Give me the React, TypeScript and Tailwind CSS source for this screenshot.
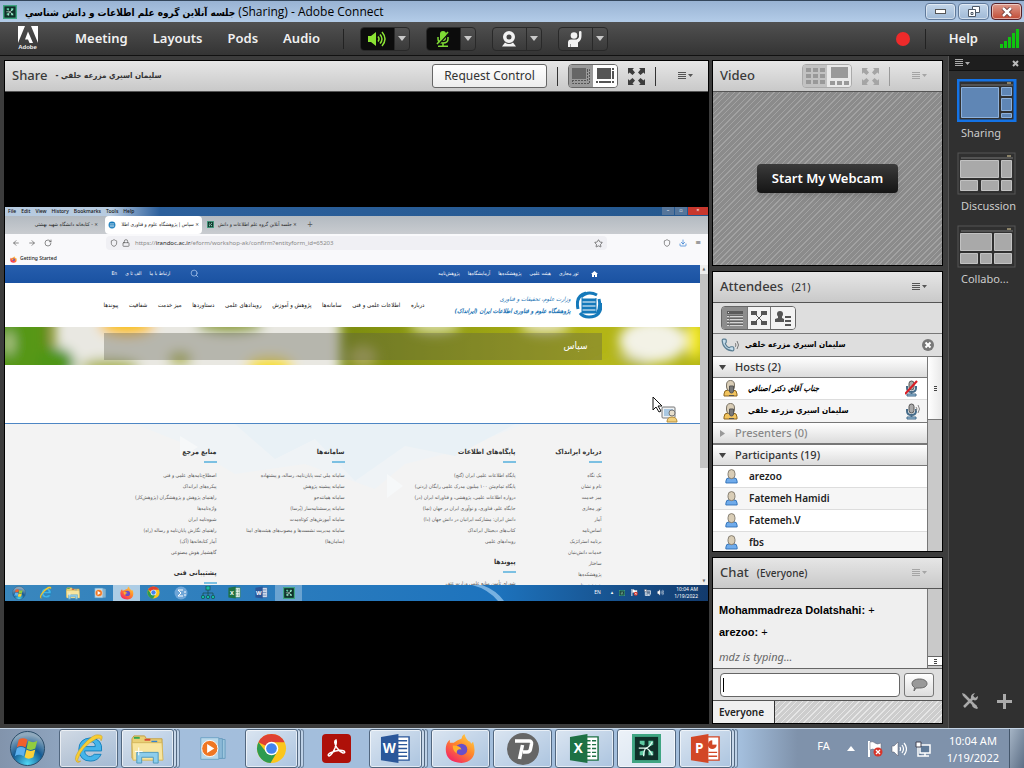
import React from "react";
import { Phone, Star, Search, Lock, Shield, RotateCw, ArrowLeft, ArrowRight, Download } from "lucide-react";

const UI = "font-['Noto_Sans','DejaVu_Sans',sans-serif]";
const FA = "font-['DejaVu_Sans_Condensed','DejaVu_Sans',sans-serif]";

function ListMenu({ dim = false }: { dim?: boolean }) {
  return (
    <button aria-label="Pod options" className={dim ? "text-[#a5a5a5]" : "text-[#555]"}>
      <svg width="16" height="9" viewBox="0 0 16 9" fill="currentColor">
        <path d="M0 0h8v1H0zM0 2h8v1H0zM0 4h8v1H0zM0 6h8v1H0zM10 2h5l-2.500 3z" />
      </svg>
    </button>
  );
}

function Expand({ dim = false }: { dim?: boolean }) {
  return (
    <button aria-label="Full screen" className={dim ? "text-[#a5a5a5]" : "text-[#3c3c3c]"}>
      <svg width="17" height="17" viewBox="0 0 17 17" fill="currentColor">
        <path d="M0 0h6L4.500 1.500 7 4.500 4.500 7 1.500 4.500 0 6zM17 0h-6l1.500 1.500L10 4.500 12.500 7l3-2.500L17 6zM0 17h6l-1.500-1.500L7 12.500 4.500 10l-3 2.500L0 11zM17 17h-6l1.500-1.500L10 12.500 12.500 10l3 2.500L17 11z" />
      </svg>
    </button>
  );
}

function PodHeader({ title, sub, children }: { title: string; sub?: React.ReactNode; children?: React.ReactNode }) {
  return (
    <header className="flex h-[31px] shrink-0 items-center border-b border-[#555] bg-gradient-to-b from-[#e6e6e6] to-[#c9c9c9] pl-[7px] pr-[14px]">
      <h2 className="text-[13px] font-medium text-[#3a3a3a]">{title}</h2>
      {sub}
      <div className="ml-auto flex items-center">{children}</div>
    </header>
  );
}

function ConnectIcon({ size }: { size: number }) {
  return (
    <svg width={size} height={size} viewBox="0 0 30 30" className="shrink-0">
      <rect x="1.500" y="1.500" width="27" height="27" fill="#0f3029" stroke="#3fa582" strokeWidth="3" />
      <path d="M8 7h5v4l-1 1-4-2zM17 7h5v4l-4 2-1-1zM8 18l4-1 1 1v4H8zM17 18l1-1 4 1v4h-5z" fill="#5fc9a2" />
      <path d="M7 14.500h7M14 14.500Q18 14 21 8M14 14.500Q18 15 21 22M14 14.500Q12 18 12 23" stroke="#e6fbf2" strokeWidth="1.300" fill="none" />
    </svg>
  );
}

function ToolGroup({ label, active, children }: { label: string; active?: boolean; children: React.ReactNode }) {
  return (
    <div className="flex h-6 w-[50px] overflow-hidden rounded-sm border border-[#292929] bg-gradient-to-b from-[#505050] to-[#3a3a3a]">
      <button aria-label={label} className={`flex w-[33px] items-center justify-center ${active ? "bg-[#0c0c0c]" : ""}`}>
        {children}
      </button>
      <button aria-label={`${label} options`} className="flex flex-1 items-center justify-center border-l border-[#292929]">
        <svg width="8" height="5" viewBox="0 0 8 5"><path d="M0 0h8L4 5z" fill="#c9c9c9" /></svg>
      </button>
    </div>
  );
}

function MenuBar() {
  return (
    <nav className="flex h-[34px] shrink-0 items-center border-b border-[#111] bg-gradient-to-b from-[#515151] to-[#343434] text-[13px] font-semibold text-[#f1f1f1]">
      <div className="flex w-[55px] flex-col items-center">
        <svg width="20" height="17" viewBox="0 0 20 17">
          <path d="M0 0h7L0 17zM13 0h7v17zM10 5.500L15 17h-3.500L10 13.500H7z" fill="#fff" />
        </svg>
        <span className="font-['Liberation_Sans',sans-serif] text-[6px] font-bold leading-[8px]">Adobe</span>
      </div>
      <div className="flex gap-[25px] pl-5">
        <button>Meeting</button><button>Layouts</button><button>Pods</button><button>Audio</button>
      </div>
      <div className="ml-[23px] mr-4 h-5 w-px bg-[#222]" />
      <div className="flex gap-4">
        <ToolGroup label="Speakers" active>
          <svg width="18" height="16" viewBox="0 0 18 16" fill="none" stroke="#8be234" strokeWidth="1.500">
            <path d="M0 5h3l5-4v14l-5-4H0z" fill="#8be234" stroke="none" />
            <path d="M10 5.500q2 2.500 0 5M12 3.500q4 4.500 0 9M14 1q6 7 0 14" />
          </svg>
        </ToolGroup>
        <ToolGroup label="Microphone" active>
          <svg width="16" height="16" viewBox="0 0 16 16" fill="none" stroke="#7fdc35" strokeWidth="1.500">
            <rect x="5" y="0" width="6" height="10" rx="3" fill="#7fdc35" stroke="none" />
            <path d="M3 6v2q0 4 5 4t5-4V6M8 12v3M3 15.200h10" />
            <path d="M3 14L14 2" stroke="#111" strokeWidth="1.500" /><path d="M2 13L13 1" />
          </svg>
        </ToolGroup>
        <ToolGroup label="Webcam">
          <svg width="16" height="16" viewBox="0 0 16 16" fill="#f2f2f2">
            <path fillRule="evenodd" d="M8 0a6 6 0 1 1 0 12A6 6 0 0 1 8 0zm0 3.500a2.500 2.500 0 1 0 0 5 2.500 2.500 0 0 0 0-5z" />
            <path d="M4 11.500q4 3 8 0l3 4H1z" />
          </svg>
        </ToolGroup>
        <ToolGroup label="Raise hand">
          <svg width="16" height="16" viewBox="0 0 16 16" fill="#f2f2f2">
            <circle cx="7" cy="4.500" r="3.300" />
            <path d="M1 16v-4.500Q1 8.500 4 8.500h5.500Q12.500 7 12 4V1q0-1 1.200-1T14.500 1v4q0 4-3.500 6.500V16H4v-3h-.5v3z" />
          </svg>
        </ToolGroup>
      </div>
      <div className="ml-auto h-[14px] w-[14px] rounded-full bg-[#ee2a2a]" />
      <div className="ml-[15px] mr-[23px] h-5 w-px bg-[#222]" />
      <button>Help</button>
      <svg className="ml-[22px] mr-1" width="20" height="19" viewBox="0 0 20 19">
        <path d="M0 15h3v4H0zM4 12h3v7H4zM8 8h3v11H8zM12 4h3v15h-3zM16 0h3v19h-3z" fill="#0fc50f" />
      </svg>
    </nav>
  );
}

const columns: { width: string; title: string; items: string[]; more?: string; moreItems?: string[] }[] = [
  { width: "w-[86px]", title: "درباره ایرانداک", items: ["یک نگاه", "نام و نشان", "میز خدمت", "تور مجازی", "آمار", "اساس‌نامه", "برنامه استراتژیک", "خدمات دانش‌بنیان", "ساختار", "پژوهشکده‌ها", "هم‌نشینی‌ها"] },
  { width: "w-[171px]", title: "پایگاه‌های اطلاعات", items: ["پایگاه اطلاعات علمی ایران (گنج)", "پایگاه تمام‌متن ۱۰۰ میلیون مدرک علمی رایگان (زدنی)", "درواره اطلاعات علمی، پژوهشی، و فناورانه ایران (در)", "جایگاه علم، فناوری، و نوآوری ایران در جهان (نما)", "دانش ایران: مشارکت ایرانیان در دانش جهان (دا)", "کتاب‌های دیجیتال ایرانداک", "رویدادهای علمی"], more: "پیوندها", moreItems: ["شورای تأمین منابع علمی وزارت عتف"] },
  { width: "w-[128px]", title: "سامانه‌ها", items: ["سامانه ملی ثبت پایان‌نامه، رساله، و پیشنهاده", "سامانه پیشینه پژوهش", "سامانه همانندجو", "سامانه پرسشنامه‌ساز (پُرسا)", "سامانه آموزش‌های کوتاه‌مدت", "سامانه مدیریت نشست‌ها و مصوب‌های هیئت‌های امنا", "(سامان‌ها)"] },
  { width: "w-[113px]", title: "منابع مرجع", items: ["اصطلاح‌نامه‌های علمی و فنی", "پیکره‌های ایرانداک", "راهنمای پژوهش و پژوهشگران (پژوهش‌کار)", "واژه‌نامه‌ها", "شیوه‌نامه ایران", "راهنمای نگارش پایان‌نامه و رساله (راه)", "آمار کتابخانه‌ها (آک)", "گاهشمار هوش مصنوعی"], more: "پشتیبانی فنی" },
];

function ColumnHead({ children }: { children: React.ReactNode }) {
  return (
    <>
      <h3 className="h-3 whitespace-nowrap text-[7px] font-bold leading-3 text-[#333]">{children}</h3>
      <div className="mb-[7px] mt-[3px] h-[2px] w-[13px] bg-[#7cc0e2]" />
    </>
  );
}

function MiniIcon({ kind }: { kind: string }) {
  if (kind === "ie") return <IeIcon size={13} />;
  if (kind === "folder") return <FolderIcon size={14} />;
  if (kind === "media") return <MediaIcon size={12} />;
  if (kind === "firefox") return <FirefoxIcon size={14} />;
  if (kind === "chrome") return <ChromeIcon size={13} />;
  if (kind === "excel") return <OfficeIcon size={13} letter="X" color="#1e7145" />;
  if (kind === "word") return <OfficeIcon size={13} letter="W" color="#2b579a" />;
  if (kind === "connect") return <ConnectIcon size={12} />;
  if (kind === "tree")
    return (
      <svg width="14" height="14" viewBox="0 0 14 14" fill="#13b9a4" stroke="#174b48" strokeWidth="0.700">
        <path d="M7 3v7M2 10V7h10v3" fill="none" /><rect x="5" y="0" width="4" height="4" /><circle cx="2" cy="11" r="1.700" /><circle cx="7" cy="11" r="1.700" /><circle cx="12" cy="11" r="1.700" />
      </svg>
    );
  return (
    <svg width="14" height="14" viewBox="0 0 14 14"><circle cx="7" cy="7" r="6.500" fill="#6fa6d8" /><path d="M9 4H4l3 3-3 3h5M10 6h2M10 9h2" stroke="#fff" fill="none" /></svg>
  );
}

function SharedScreen() {
  const nav = ["درباره", "اطلاعات علمی و فنی", "سامانه‌ها", "پژوهش و آموزش", "رویدادهای علمی", "دستاوردها", "میز خدمت", "شفافیت", "پیوندها"];
  return (
    <div className={`relative w-full overflow-hidden bg-white ${FA}`}>
      <div className={`flex h-[9px] items-center bg-gradient-to-r from-[#b7cbe0] from-15% via-[#2c609c] via-22% to-[#24588f] text-[5px] leading-[9px] text-[#111] ${UI}`}>
        <div className="flex gap-[5px] pl-[3px] font-medium">
          <span>File</span><span>Edit</span><span>View</span><span>History</span><span>Bookmarks</span><span>Tools</span><span>Help</span>
        </div>
        <div className="ml-auto flex h-2 gap-px self-start text-[5px] leading-[7px] text-white">
          <span className="w-3 bg-[#55759a] text-center">–</span><span className="w-3 bg-[#55759a] text-center">▫</span><span className="w-5 bg-[#c8372d] text-center">×</span>
        </div>
      </div>
      <div className="flex h-[18px] items-stretch bg-gradient-to-b from-[#b3bac1] to-[#c9ccd0] text-[5px] text-[#222]">
        <div className="flex w-[100px] items-center justify-end whitespace-nowrap pr-[7px]"><span dir="rtl">× - کتابخانه دانشگاه شهید بهشتی</span></div>
        <div className="flex w-[97px] items-center gap-1 rounded-sm bg-white px-[3px]">
          <svg width="8" height="8" viewBox="0 0 26 28" className="shrink-0"><circle cx="13" cy="14" r="12" fill="#1479ba" /><path d="M5 10h16M5 15h16M5 20h16" stroke="#fff" strokeWidth="2" /></svg>
          <span dir="rtl" className="flex-1 whitespace-nowrap">× سپاس | پژوهشگاه علوم و فناوری اطلا</span>
        </div>
        <div className="flex w-[97px] items-center gap-1 px-[5px]">
          <ConnectIcon size={7} />
          <span dir="rtl" className="flex-1 whitespace-nowrap">× جلسه آنلاین گروه علم اطلاعات و دانش</span>
        </div>
        <span className="self-center pl-[8px] text-[8px] text-[#555]">+</span>
      </div>
      <div className="flex h-[19px] items-center bg-[#f9f9fb] pl-[7px] pr-[7px] text-[#555]">
        <div className="flex w-[94px] gap-2"><ArrowLeft size={8} /><ArrowRight size={8} /><RotateCw size={8} /></div>
        <div className="flex h-[14px] flex-1 items-center gap-1 rounded-sm bg-[#f0f0f4] px-1">
          <Shield size={8} /><Lock size={8} />
          <span className={`pl-px text-[6px] text-[#888] ${UI}`}>https://<span className="text-[#222]">irandoc.ac.ir</span>/eform/workshop-ak/confirm?entityform_id=65203</span>
          <Star size={9} className="ml-auto" />
        </div>
        <div className="ml-14 flex gap-2"><Shield size={8} /><Download size={8} className="text-[#2372cf]" /><span className="text-[8px] leading-[8px]">≡</span></div>
      </div>
      <div className={`flex h-3 items-center gap-[3px] bg-[#f9f9fb] pl-[5px] pt-px text-[5px] font-medium text-[#222] ${UI}`}><FirefoxIcon size={7} />Getting Started</div>
      <div className="flex">
        <div className="min-w-0 flex-1">
          <div className="h-[18px] bg-gradient-to-b from-[#265ead] to-[#1a52a2]">
            <div dir="rtl" className="mx-auto flex h-full max-w-[498px] items-center gap-2 px-1 text-[5px] text-white">
              <svg width="7" height="6" viewBox="0 0 14 12" fill="#fff" className="ml-1"><path d="M7 0l7 6h-2v6H8V8H6v4H2V6H0z" /></svg>
              <span>تور مجازی</span><span>هیئت علمی</span><span>پژوهشکده‌ها</span><span>آزمایشگاه‌ها</span><span>پژوهش‌نامه</span>
              <div className="mr-auto flex items-center gap-2 pl-1"><Search size={9} className="ml-3 text-[#a9c5ec]" /><span>ارتباط با ما</span><span>الف تا ی</span><span>En</span></div>
            </div>
          </div>
          <div dir="rtl" className="mx-auto flex h-[44px] max-w-[498px] items-center">
            <svg width="26" height="28" viewBox="0 0 26 28" className="shrink-0" fill="none" stroke="#1479ba">
              <path d="M5 6Q12-1 21 4M25 12Q26 26 13 26 7 26 4 22M2 18Q-1 5 10 2M21 23Q25 16 23 8" strokeWidth="3" />
              <path d="M6 9h14M6 13h14M6 17h14M6 21h14" strokeWidth="3" /><path d="M6 7v15M20 7v15" />
            </svg>
            <div className="mr-[5px] w-[124px] whitespace-nowrap italic text-[#1c74b5]">
              <div className="text-[6px] leading-[11px]">وزارت علوم، تحقیقات و فناوری</div>
              <div className="text-[6px] font-bold leading-[13px]">پژوهشگاه علوم و فناوری اطلاعات ایران (ایرانداک)</div>
            </div>
            <div className="mr-[22px] flex flex-1 justify-between whitespace-nowrap text-[6px] font-medium text-[#111]">
              {nav.map((n) => <a key={n} href="#">{n}</a>)}
            </div>
          </div>
          <div className="relative h-[38px] overflow-hidden bg-[#8e9d1a]">
            <svg className="absolute inset-0 h-full w-full" viewBox="0 0 695 38" preserveAspectRatio="none">
              <defs>
                <filter id="soft" x="-20%" y="-50%" width="140%" height="200%"><feGaussianBlur stdDeviation="6" /></filter>
                <linearGradient id="field"><stop offset=".45" stopColor="#76880f" /><stop offset=".85" stopColor="#b3b516" /></linearGradient>
              </defs>
              <rect width="695" height="38" fill="url(#field)" />
              <g filter="url(#soft)">
                <rect x="50" y="-20" width="285" height="80" fill="#e9e8e2" />
                <rect x="-30" y="-20" width="70" height="80" fill="#579718" />
                <ellipse cx="4" cy="16" rx="5" ry="12" fill="#b5c98c" />
                <ellipse cx="50" cy="36" rx="20" ry="16" fill="#4f9612" />
                <ellipse cx="122" cy="-2" rx="28" ry="12" fill="#f9c30a" />
                <ellipse cx="265" cy="40" rx="24" ry="11" fill="#f6df2a" />
                <ellipse cx="225" cy="-2" rx="34" ry="9" fill="#8fa01c" />
                <ellipse cx="105" cy="40" rx="30" ry="8" fill="#a9b340" />
                <ellipse cx="175" cy="32" rx="12" ry="8" fill="#b8bd5e" />
                <ellipse cx="430" cy="-2" rx="25" ry="9" fill="#d8dba0" />
                <ellipse cx="358" cy="30" rx="14" ry="12" fill="#aaa955" />
                <ellipse cx="540" cy="-2" rx="25" ry="9" fill="#e6e3ba" />
                <ellipse cx="648" cy="14" rx="34" ry="22" fill="#f3f2e6" />
                <ellipse cx="690" cy="12" rx="9" ry="20" fill="#f4ea2c" />
                <ellipse cx="615" cy="40" rx="30" ry="10" fill="#b5b81c" />
              </g>
            </svg>
            <div dir="rtl" className="relative mx-auto mt-[6px] h-[27px] max-w-[498px] bg-[#5a5a4a]/35 px-[14px] text-[10px] leading-[25px] text-white">سپاس</div>
          </div>
          <div className="h-[58px]" />
          <div className="relative h-[162px] overflow-hidden border-t border-[#4d86c4] bg-[#f3f3f3]">
            <svg className="absolute left-0 top-0 h-20 w-full" viewBox="0 0 695 80" preserveAspectRatio="none">
              <path d="M130 0h390L440 30 400 40 370 65 300 40 230 50 180 20z" fill="#eff3f6" />
              <path d="M230 0l40 35 40-20 40 42 50-35 50 10 60-32z" fill="#e9f1f6" />
              <path d="M175 12l18 11-18 11zM382 50l16 12-16 12z" fill="#f6f8f9" />
            </svg>
            <div dir="rtl" className="relative mx-auto flex max-w-[498px] pt-[22px]">
              {columns.map((c) => (
                <section key={c.title} className={`${c.width} shrink-0`}>
                  <ColumnHead>{c.title}</ColumnHead>
                  <ul className="whitespace-nowrap text-[5px] leading-[11px] text-[#555]">{c.items.map((i) => <li key={i}>{i}</li>)}</ul>
                  {c.more && (
                    <div className="pt-[9px]">
                      <ColumnHead>{c.more}</ColumnHead>
                      <div className="whitespace-nowrap text-[5px] leading-[6px] text-[#555]">{c.moreItems}</div>
                    </div>
                  )}
                </section>
              ))}
            </div>
          </div>
        </div>
        <div className="flex w-2 flex-col bg-[#eee]">
          <span className="h-[9px] text-center text-[4px] leading-[7px] text-[#666]">▲</span>
          <div className="h-[194px] bg-[#c4c4c4]" />
          <span className="mt-auto text-center text-[4px] leading-[8px] text-[#666]">▼</span>
        </div>
      </div>
      <div className="flex h-4 items-center bg-gradient-to-r from-[#3a87bd] via-[#1d73bd] via-70% to-[#123a6c]">
        {["start", "ie", "folder", "media", "firefox", "chrome", "sigma", "tree", "excel", "word", "connect"].map((k) => (
          <span key={k} className={`flex h-4 w-[27px] items-center justify-center ${k === "firefox" ? "bg-white/60" : k === "connect" ? "bg-white/30" : ""}`}>
            {k === "start" ? <StartOrb size={14} /> : <MiniIcon kind={k} />}
          </span>
        ))}
        <svg width="40" height="16" viewBox="0 0 40 16" className="ml-[170px] shrink"><path d="M0 0h10q14 5 22 16h-6Q16 4 0 0z" fill="#8fc0ea" opacity=".8" /></svg>
        <div className={`ml-auto flex items-center gap-[6px] pr-[10px] text-[5px] leading-[7px] text-white ${UI}`}>
          <span className="pr-1">EN</span><span>▴</span><ConnectIcon size={6} /><FlagIcon size={7} /><NetIcon size={7} /><SoundIcon size={7} />
          <span className="pl-1 text-right">10:04 AM<br />1/19/2022</span>
        </div>
      </div>
      <svg className="absolute left-[92%] top-[48%]" width="26" height="27" viewBox="0 0 26 27">
        <path d="M1 1v13l3-3 3 5 2-1-3-5h4z" fill="#fff" stroke="#111" />
        <rect x="10" y="11" width="13" height="11" rx="1" fill="#eef1f3" stroke="#777" /><rect x="12" y="13" width="9" height="7" fill="#a9c8e2" />
        <circle cx="20" cy="17" r="3" fill="#e8dfcc" stroke="#777" /><path d="M15 26q0-5 5-5t5 5z" fill="#f1cf7b" stroke="#b48c3b" />
      </svg>
    </div>
  );
}

function SharePod() {
  return (
    <main className="flex min-w-0 flex-1 flex-col border border-black bg-black">
      <PodHeader title="Share" sub={<span className={`pl-2 text-[8px] font-bold text-[#333] ${FA}`}>- سليمان اسيري مزرعه خلفي</span>}>
        <button className="h-6 w-[115px] whitespace-nowrap rounded-[3px] border border-[#666] bg-gradient-to-b from-white to-[#ededed] text-[12px] text-[#333]">Request Control</button>
        <div className="mx-[10px] h-[19px] w-px bg-[#333]" />
        <div className="flex overflow-hidden rounded-sm border border-[#666]">
          <button aria-label="Fit" className="flex h-[22px] w-6 items-center justify-center bg-[#9a9a9a]">
            <svg width="18" height="16" viewBox="0 0 18 16"><path d="M0 0h14v11H0z" fill="#666" /><path d="M.5 12v3.500h17V1.500H15M0 12.500h15.500V1" fill="none" stroke="#555" strokeDasharray="2 1" /></svg>
          </button>
          <button aria-label="Actual size" className="flex h-[22px] w-6 items-center justify-center bg-white">
            <svg width="19" height="16" viewBox="0 0 19 16" fill="#555"><path d="M1 0h14v11H1zM16 3h2v8h-2zM16 0h2v2h-2zM0 13h2v2H0zM3 13h12v2H3zM16 13h2v2h-2z" /></svg>
          </button>
        </div>
        <div className="flex pl-[10px]"><Expand /></div>
        <div className="ml-[10px] mr-[22px] h-[19px] w-px bg-[#333]" />
        <ListMenu />
      </PodHeader>
      <div className="flex flex-1 items-center pb-2"><SharedScreen /></div>
    </main>
  );
}

function VideoPod() {
  return (
    <section className="flex h-[206px] shrink-0 flex-col border border-black">
      <PodHeader title="Video">
        <div className="flex overflow-hidden rounded-sm border border-[#aaa] text-[#999]">
          <button aria-label="Grid" className="flex h-[22px] w-6 items-center justify-center bg-[#c2c2c2]">
            <svg width="19" height="17" viewBox="0 0 19 17" fill="currentColor"><path d="M0 0h5v4H0zM7 0h5v4H7zM14 0h5v4h-5zM0 6h5v4H0zM7 6h5v4H7zM14 6h5v4h-5zM0 12h5v4H0zM7 12h5v4H7zM14 12h5v4h-5z" /></svg>
          </button>
          <button aria-label="Filmstrip" className="flex h-[22px] w-6 items-center justify-center bg-[#e9e9e9]">
            <svg width="19" height="18" viewBox="0 0 19 18" fill="currentColor"><path d="M1 0h17v11H1zM0 14h5v4H0zM7 14h5v4H7zM14 14h5v4h-5z" /></svg>
          </button>
        </div>
        <div className="flex pl-[10px]"><Expand dim /></div>
        <div className="ml-[10px] mr-[22px] h-[19px] w-px bg-[#999]" />
        <ListMenu dim />
      </PodHeader>
      <div className="flex flex-1 items-center justify-center bg-[repeating-linear-gradient(135deg,#8b8b8b_0_3px,#a2a2a2_3px_4px)]">
        <button className="h-[29px] rounded-sm bg-gradient-to-b from-[#3b3b3b] to-[#151515] px-[15px] text-[13px] font-semibold text-white shadow-md">Start My Webcam</button>
      </div>
    </section>
  );
}

function Person({ host = false }: { host?: boolean }) {
  return (
    <svg width={host ? 15 : 13} height={host ? 17 : 15} viewBox="0 0 15 17" className="shrink-0">
      <path d="M1 16v-2q0-4 4-4h5q4 0 4 4v2z" fill={host ? "#f2c45e" : "#6fabeb"} stroke={host ? "#8b651e" : "#2a6cb3"} />
      <path d="M3.500 5q0-4.500 4-4.500t4 4.500v2q0 4-4 4t-4-4z" fill="#d9cdb6" stroke="#7a7366" />
      {host && <path d="M6.500 6h4v5q0 2-2 2t-2-2zM6 15.500h5" fill="#777" stroke="#555" />}
    </svg>
  );
}

function MicIcon({ muted }: { muted?: boolean }) {
  return (
    <svg width="16" height="17" viewBox="0 0 16 17" fill="none" stroke="#456b88">
      <path d="M2 6v2q0 4 4.500 4T11 8V6M6.500 12v2" strokeWidth="2" /><path d="M2 14h9v2H2z" fill="#9fc6e2" />
      <rect x="4" y="1" width="5" height="9" rx="2.500" fill="#aaa" stroke="#555" />
      {muted ? <path d="M0 14L12 1" stroke="#d81f26" strokeWidth="2.200" /> : <path d="M11 4q2 2 0 4M13 2q3 4 0 8" stroke="#888" />}
    </svg>
  );
}

function GroupHead({ open, dim, children }: { open?: boolean; dim?: boolean; children: React.ReactNode }) {
  return (
    <button className={`flex h-[22px] w-full items-center gap-[9px] border-b border-t border-[#777] bg-gradient-to-b from-white to-[#dcdcdc] pl-[6px] text-left text-[11px] font-medium ${dim ? "text-[#888]" : "text-[#333]"}`}>
      <svg width="7" height="7" viewBox="0 0 7 7" fill={dim ? "#999" : "#444"}><path d={open ? "M0 1h7L3.500 6z" : "M1 0v7l5-3.500z"} /></svg>
      {children}
    </button>
  );
}

function AttendeesPod() {
  return (
    <section className="flex min-h-[281px] flex-1 basis-0 flex-col overflow-hidden border border-black bg-[#dedede]">
      <PodHeader title="Attendees" sub={<span className="pl-2 text-[11px] text-[#333]">(21)</span>}><ListMenu /></PodHeader>
      <div className="flex h-[31px] shrink-0 items-center border-b border-[#777] pl-2">
        <div className="flex overflow-hidden rounded-sm border border-[#666] text-[#555]">
          <button aria-label="Attendee list" className="flex h-[22px] w-[25px] items-center justify-center bg-[#8d8d8d]">
            <svg width="16" height="15" viewBox="0 0 16 15"><path d="M0 0h16v3H0z" fill="#5a5a5a" /><path d="M1 1h1v1H1z" fill="#ddd" /><path d="M0 5.500h2M3 5.500h13M0 8.500h2M3 8.500h13M0 11.500h2M3 11.500h13M0 14.500h2M3 14.500h13" stroke="#d5d5d5" /><path d="M0 4h16v1H0zM0 7h16v1H0zM0 10h16v1H0zM0 13h16v1H0z" fill="#666" /></svg>
          </button>
          <button aria-label="Breakout rooms" className="flex h-[22px] w-6 items-center justify-center border-x border-[#777] bg-[#f3f3f3]">
            <svg width="16" height="14" viewBox="0 0 16 14"><path d="M0 0h6v4H0zM10 0h6v4h-6zM0 10h6v4H0zM10 10h6v4h-6z" fill="#555" /><path d="M4 3l8 8M12 3l-8 8" stroke="#555" /></svg>
          </button>
          <button aria-label="Attendee status" className="flex h-[22px] w-6 items-center justify-center bg-[#f3f3f3]">
            <svg width="16" height="15" viewBox="0 0 16 15" fill="#555"><circle cx="5" cy="3" r="3" /><path d="M3 5h4v2l2 1v3H0V8l3-1zM10 5h6v2h-6zM10 9h6v2h-6zM10 13h6v2h-6z" /></svg>
          </button>
        </div>
      </div>
      <div className="flex h-[22px] shrink-0 items-center gap-[5px] pl-[8px] pr-2">
        <div className="flex"><Phone size={14} fill="#c5dceb" className="text-[#5a7d92]" /><svg width="5" height="12" viewBox="0 0 5 12" fill="none" stroke="#777"><path d="M0 5q2 2 0 4M2 3q3 4 0 8" /></svg></div>
        <span className={`text-[8px] font-bold text-black ${FA}`}>سليمان اسيري مزرعه خلفي</span>
        <button aria-label="Close" className="ml-auto">
          <svg width="12" height="12" viewBox="0 0 12 12"><circle cx="6" cy="6" r="6" fill="#777" /><path d="M3.500 3.500l5 5M8.500 3.500l-5 5" stroke="#fff" strokeWidth="2" /></svg>
        </button>
      </div>
      <div className="flex min-h-0 flex-1">
        <div className="min-w-0 flex-1 overflow-hidden bg-white">
          <GroupHead open>Hosts (2)</GroupHead>
          <div className="flex h-[22px] items-center gap-[10px] border-b border-[#ddd] pl-[10px] pr-[6px]">
            <Person host /><span className={`text-[8px] font-bold italic ${FA}`}>جناب آقاي دكتر اصنافي</span><span className="ml-auto"><MicIcon muted /></span>
          </div>
          <div className="flex h-[22px] items-center gap-[10px] bg-[#f5f5f5] pl-[10px] pr-[6px]">
            <Person host /><span className={`text-[8px] font-bold ${FA}`}>سليمان اسيري مزرعه خلفي</span><span className="ml-auto"><MicIcon /></span>
          </div>
          <GroupHead dim>Presenters (0)</GroupHead>
          <GroupHead open>Participants (19)</GroupHead>
          <ul>
            {["arezoo", "Fatemeh Hamidi", "Fatemeh.V", "fbs"].map((n) => (
              <li key={n} className="flex h-[22px] items-center gap-[11px] border-b border-[#ddd] pl-3 text-[10px] font-semibold text-[#222] even:bg-[#f6f6f6]"><Person />{n}</li>
            ))}
          </ul>
        </div>
        <div className="w-[15px] shrink-0 border-l border-[#777] bg-[#c9c9c9]">
          <div className="flex h-16 items-center justify-center border-b border-t border-[#777] bg-gradient-to-r from-white to-[#e8e8e8]"><svg width="3" height="5"><path d="M0 0h3v1H0zM0 2h3v1H0zM0 4h3v1H0z" fill="#444" /></svg></div>
        </div>
      </div>
    </section>
  );
}

function ChatPod() {
  return (
    <section className="flex h-[167px] shrink-0 flex-col overflow-hidden border border-black bg-[#dedede]">
      <PodHeader title="Chat" sub={<span className="pl-2 text-[10px] font-medium text-[#333]">(Everyone)</span>}><ListMenu dim /></PodHeader>
      <div className="flex min-h-0 flex-1 border-b border-[#666] bg-[#efefef]">
        <div className="flex-1 pl-[6px] pt-[10px] font-['Liberation_Sans',sans-serif] text-[11px] font-bold leading-[22px] text-black">
          <p>Mohammadreza Dolatshahi: <span className="font-normal">+</span></p>
          <p>arezoo: <span className="font-normal">+</span></p>
          <p className={`pt-[3px] text-[11px] font-normal italic text-[#666] ${UI}`}>mdz is typing...</p>
        </div>
        <div className="flex w-[15px] flex-col justify-end border-l border-[#777] bg-[#c9c9c9] pb-[2px]">
          <div className="flex h-[10px] items-center justify-center border-y border-[#666] bg-white"><svg width="3" height="5"><path d="M0 0h3v1H0zM0 2h3v1H0zM0 4h3v1H0z" fill="#444" /></svg></div>
        </div>
      </div>
      <div className="flex h-[31px] shrink-0 items-center gap-1 pl-[7px] pr-2">
        <label className="flex h-6 min-w-0 flex-1 items-center rounded border border-[#666] bg-white px-[2px]">
          <span className="h-[14px] w-px bg-black" />
          <input aria-label="Chat message" className="min-w-0 flex-1 bg-transparent px-px text-[11px] outline-none" />
        </label>
        <button aria-label="Send" className="flex h-6 w-[30px] items-center justify-center rounded-[3px] border border-[#777] bg-gradient-to-b from-white to-[#ddd]">
          <svg width="17" height="14" viewBox="0 0 17 14"><path d="M8.500 1C13 1 16 3 16 5.700S13 10 8.500 10L5 10 3 13 3.500 9.500Q1 8 1 5.700C1 3 4 1 8.500 1z" fill="#999" stroke="#666" /></svg>
        </button>
      </div>
      <div className="flex h-[23px] shrink-0 border-t border-[#555] bg-[repeating-linear-gradient(135deg,#cdcdcd_0_3px,#e6e6e6_3px_4px)]">
        <button className="w-[62px] border-r border-[#333] bg-[#f0f0f0] pr-1 text-[10px] font-semibold text-[#222]">Everyone</button>
      </div>
    </section>
  );
}

function LayoutThumb({ label, active, d }: { label: string; active?: boolean; d: string }) {
  return (
    <button className="flex h-[73px] flex-col text-left">
      <svg width="60" height="43" viewBox="0 0 60 43">
        <rect x="1" y="1" width="57" height="41" fill="#303030" stroke={active ? "#1473e6" : "#555"} strokeWidth={active ? 3 : 1} />
        <path d="M4 6h52" stroke="#777" /><path d="M50 4h4" stroke="#e9d7a0" />
        <path d={d} fill={active ? "#5f86b5" : "#a9a9a9"} stroke={active ? "#8db1dc" : "#c2c2c2"} />
      </svg>
      <span className="h-[22px] pl-1 text-[11px] leading-[22px] text-[#ccc]">{label}</span>
    </button>
  );
}

function LayoutSidebar() {
  return (
    <aside className="flex w-[76px] shrink-0 flex-col border-l border-[#555] bg-[#303030]">
      <div className="flex h-[15px] items-center justify-between border-b border-[#111] bg-[#1e1e1e] pl-[6px] pr-[5px] text-[#aaa]">
        <svg width="15" height="8" viewBox="0 0 15 8" fill="currentColor"><path d="M0 0h8v1H0zM0 2h8v1H0zM0 4h8v1H0zM0 6h8v1H0zM10 3h5l-2.500 3z" /></svg>
        <svg width="7" height="7" viewBox="0 0 7 7"><path d="M1 1l5 5M6 1L1 6" stroke="#bbb" strokeWidth="2" /></svg>
      </div>
      <div className="flex flex-col pl-2 pt-[8px]">
        <LayoutThumb label="Sharing" active d="M4.500 8.500h37v30h-37zM44.500 8.500h10v8h-10zM44.500 19.500h10v12h-10zM44.500 34.500h10v4h-10z" />
        <LayoutThumb label="Discussion" d="M3.500 8.500h38v17h-38zM44.500 8.500h10v17h-10zM3.500 28.500h17v10h-17zM24.500 28.500h17v10h-17zM44.500 28.500h10v10h-10z" />
        <LayoutThumb label="Collabo..." d="M3.500 8.500h31v17h-31zM37.500 8.500h17v17h-17zM3.500 28.500h17v10h-17zM23.500 28.500h11v10h-11zM37.500 28.500h17v10h-17z" />
      </div>
      <div className="mt-auto flex justify-between pb-[18px] pl-3 pr-3 text-[#aaa]">
        <button aria-label="Manage layouts"><svg width="18" height="18" viewBox="0 0 18 18"><path d="M3 15L13 5M4 4l11 11" stroke="#aaa" strokeWidth="2.500" /><path d="M1 1l3 1 2 3-1 1-3-2zM12 12l3 1 2 3-1 1-3-1-2-2zM14 1l-2 3 2 2 3-2q0 4-3 4.500L10 7q-1-5 4-6z" fill="#aaa" /></svg></button>
        <button aria-label="Add layout"><svg width="15" height="15" viewBox="0 0 15 15"><path d="M7.500 0v15M0 7.500h15" stroke="#aaa" strokeWidth="3" /></svg></button>
      </div>
    </aside>
  );
}

function StartOrb({ size }: { size: number }) {
  return (
    <svg width={size} height={size} viewBox="0 0 38 38" className="shrink-0">
      <defs><radialGradient id="orb" cx="50%" cy="95%" r="85%"><stop offset="0" stopColor="#4fd7f4" /><stop offset=".55" stopColor="#145b94" /><stop offset="1" stopColor="#8fa9bd" /></radialGradient></defs>
      <circle cx="19" cy="19" r="17.500" fill="url(#orb)" stroke="#294b68" />
      <path d="M10 10q4-3 9 0l-2 8q-5-3-9 0z" fill="#f0602c" /><path d="M20 11q5 3 9 0l-2 8q-5 3-9 0z" fill="#91cc3f" />
      <path d="M8 19q4-3 9 0l-2 8q-5-3-9 0z" fill="#5cb1ef" /><path d="M18 20q4 3 9 0l-2 8q-5 3-9 0z" fill="#fbd13a" />
    </svg>
  );
}
function IeIcon({ size }: { size: number }) {
  return (
    <svg width={size} height={size} viewBox="0 0 32 32">
      <path d="M12 18.500h17.500Q31 6 18 5 6 6 6 17q1 12 12 12 8 0 11-7h-7q-4 4-8 1-2-2-2-4.500M12 14q1-5 6-5t5 5z" fill="#45b4ea" stroke="#1782bd" fillRule="evenodd" />
      <path d="M4 30Q-1 26 10 13T27 2q5 0 2 6 0-4-5-2Q9 14 5 27q-1 3 3 2-2 2-4 1z" fill="#f7ce35" stroke="#c99816" strokeWidth=".5" />
    </svg>
  );
}
function FolderIcon({ size }: { size: number }) {
  return (
    <svg width={size} height={size} viewBox="0 0 34 32">
      <path d="M1 6l2-3h11l2 3h16v20H1z" fill="#e9cf76" stroke="#c4a042" /><path d="M3 4h6v2H3z" fill="#33a852" /><path d="M14 6h6v2h-6z" fill="#d94832" /><path d="M21 8h6v2h-6z" fill="#3483ce" />
      <path d="M1 10h31l1 18H2z" fill="#f8e59e" stroke="#d5b75c" /><path d="M6 31V20h22v11h-5v-6H11v6z" fill="#8ccdec" stroke="#5099bd" /><path d="M8 15v8M4 19h8" stroke="#fff" />
    </svg>
  );
}
function MediaIcon({ size }: { size: number }) {
  return (
    <svg width={size} height={size} viewBox="0 0 30 28"><path d="M9 4h20v21H9z" fill="#9cc6de" stroke="#669bbd" /><path d="M6 3h20v22H6z" fill="#8bb9d7" stroke="#669bbd" /><path d="M2 2h20v24H2z" fill="#b8d8ea" stroke="#6aa2c4" /><circle cx="12" cy="14" r="9" fill="#ef7723" stroke="#fff" /><path d="M9 9v10l8-5z" fill="#fff" /></svg>
  );
}
function ChromeIcon({ size }: { size: number }) {
  return (
    <svg width={size} height={size} viewBox="0 0 32 32"><circle cx="16" cy="16" r="15" fill="#fbc61c" /><path d="M16 16L2.500 9.500A15 15 0 0 1 29.500 9.500H16z" fill="#df4133" /><path d="M2.500 9.500A15 15 0 0 0 15 31l7-12H10z" fill="#2d9b50" /><circle cx="16" cy="16" r="7" fill="#fff" /><circle cx="16" cy="16" r="5.500" fill="#4384ef" /></svg>
  );
}
function FirefoxIcon({ size }: { size: number }) {
  return (
    <svg width={size} height={size} viewBox="0 0 32 32" className="shrink-0">
      <defs><linearGradient id="fox" x1="1" y1="0" x2="0.300" y2="1"><stop offset="0" stopColor="#ffe04a" /><stop offset=".5" stopColor="#ff8a2b" /><stop offset="1" stopColor="#f42763" /></linearGradient></defs>
      <path d="M20 1q2 7 6 8l1 2 2-2q6 20-12 22Q-1 30 1 14q1-5 4-7v3l4 0q4-3 8-4 0-3 3-5z" fill="url(#fox)" /><circle cx="17" cy="17" r="6" fill="#6b4fc8" /><path d="M8 13q8 0 9 4-5-1-5 4-4-2-4-8z" fill="#ffb12c" />
    </svg>
  );
}
function OfficeIcon({ size, letter, color }: { size: number; letter: string; color: string }) {
  return (
    <svg width={size} height={size} viewBox="0 0 32 32">
      <path d="M16 4h14v24H16z" fill="#fff" stroke={color} strokeWidth="1.500" />
      {letter === "P" ? <><circle cx="23" cy="12" r="4.500" fill={color} /><path d="M23 12V7h5v5z" fill="#fff" /><path d="M19 20h9M19 24h9" stroke={color} strokeWidth="1.500" /></> : <path d="M18 8h10M18 12h10M18 16h10M18 20h10M18 24h10" stroke={color} strokeWidth="1.500" />}
      {letter === "X" && <path d="M23 6v20" stroke="#fff" strokeWidth="1.500" />}
      <path d="M1 4l18-3v30L1 28z" fill={color} />
      <text x="9.500" y="21" textAnchor="middle" fontSize="14" fontWeight="bold" fill="#fff" fontFamily="Open Sans, sans-serif">{letter}</text>
    </svg>
  );
}
function FlagIcon({ size }: { size: number }) {
  return <svg width={size} height={size} viewBox="0 0 16 16"><path d="M2 0v16" stroke="#fff" strokeWidth="2" /><path d="M3 1q3-1 5 1t6 0v7q-4 2-6 0t-5 0z" fill="#fff" stroke="#667" strokeWidth=".5" /><circle cx="11" cy="11" r="4.500" fill="#d8352a" /><path d="M9 9l4 4M13 9l-4 4" stroke="#fff" strokeWidth="1.300" /></svg>;
}
function SoundIcon({ size }: { size: number }) {
  return <svg width={size} height={size} viewBox="0 0 16 16" fill="none" stroke="#fff"><path d="M1 5h2l4-4v14l-4-4H1z" fill="#fff" stroke="#556" strokeWidth=".5" /><path d="M9 6q1 2 0 4M11 4q3 4 0 8M13 2q5 6 0 12" strokeWidth="1.200" /></svg>;
}
function NetIcon({ size }: { size: number }) {
  return <svg width={size} height={size} viewBox="0 0 16 16"><path d="M5 4h10v8H5zM10 12v3M6 15h8M3 6v9h4" fill="#607a98" stroke="#fff" strokeWidth="1.500" /><path d="M1 1h5v5H1z" fill="#fff" stroke="#445" /></svg>;
}

function TaskSlot({ label, open, stacked, active, children }: { label: string; open?: boolean; stacked?: boolean; active?: boolean; children: React.ReactNode }) {
  return (
    <div className="flex h-full w-[62px] pr-[3px]">
      <button aria-label={label} className={`flex h-full flex-1 items-center justify-center rounded-[3px] ${open ? "border border-[#52677f] bg-gradient-to-br from-white/60 to-white/10 shadow-[inset_0_0_0_1px_rgba(255,255,255,.6)]" : ""} ${active ? "bg-white/50" : ""}`}>{children}</button>
      {stacked && <><span className="w-[3px] rounded-r-sm border-y border-r border-[#52677f] bg-white/40" /><span className="w-[3px] rounded-r-sm border-y border-r border-[#6b829d] bg-white/30" /></>}
    </div>
  );
}

function Taskbar() {
  return (
    <footer className="flex h-10 shrink-0 items-center border-t border-[#c5d5e6] bg-gradient-to-r from-[#8294ac] from-0% via-[#a3bedc] via-15% to-[#a3bedc] text-white">
      <button aria-label="Start" className="flex w-[59px] justify-center pr-[5px]"><StartOrb size={37} /></button>
      <div className="flex h-full">
        <TaskSlot label="Internet Explorer" open><IeIcon size={31} /></TaskSlot>
        <TaskSlot label="Explorer" open stacked><FolderIcon size={33} /></TaskSlot>
        <TaskSlot label="Media Player"><MediaIcon size={27} /></TaskSlot>
        <TaskSlot label="Chrome" open stacked><ChromeIcon size={31} /></TaskSlot>
        <TaskSlot label="Acrobat">
          <svg width="29" height="29" viewBox="0 0 29 29"><rect width="29" height="29" rx="4" fill="#ae1009" /><path d="M14 6q-3 1 1 8 3 4 6 5 3 0 1-2-5-2-14 2-3 2-1 3 3-1 6-8 2-6 1-8z" fill="none" stroke="#fff" strokeWidth="1.500" /></svg>
        </TaskSlot>
        <TaskSlot label="Word" open stacked><OfficeIcon size={31} letter="W" color="#2b579a" /></TaskSlot>
        <TaskSlot label="Firefox" open><FirefoxIcon size={31} /></TaskSlot>
        <TaskSlot label="Psiphon" open>
          <svg width="32" height="32" viewBox="0 0 32 32"><circle cx="16" cy="16" r="16" fill="#666" /><path d="M12.500 26l3-14M8 8h14q3 0 2.500 3l-1 5q-.5 3-3.500 3h-4" fill="none" stroke="#fff" strokeWidth="3.500" /></svg>
        </TaskSlot>
        <TaskSlot label="Excel" open><OfficeIcon size={31} letter="X" color="#1e7145" /></TaskSlot>
        <TaskSlot label="Adobe Connect" open active><ConnectIcon size={29} /></TaskSlot>
        <TaskSlot label="PowerPoint" open stacked><OfficeIcon size={31} letter="P" color="#d24726" /></TaskSlot>
      </div>
      <div className="flex h-full flex-1 items-center justify-end bg-gradient-to-r from-[#a3bedc] to-[#7f92ab] to-20% text-[12px]">
        <span className="pb-1 pr-[17px] text-[11px]">FA</span>
        <svg width="8" height="5" viewBox="0 0 8 5"><path d="M4 0l4 5H0z" fill="#fff" /></svg>
        <div className="flex gap-2 pl-3 pr-4"><FlagIcon size={16} /><SoundIcon size={16} /><NetIcon size={16} /></div>
        <div className="whitespace-nowrap pr-[10px] text-center text-[11px] leading-[17px]">10:04 AM<br />1/19/2022</div>
        <button aria-label="Show desktop" className="h-full w-[15px] border-l border-[#44566b] bg-gradient-to-br from-[#a5b4c5] to-[#5d6f86]" />
      </div>
    </footer>
  );
}

function WindowButton({ label, close, children }: { label: string; close?: boolean; children: React.ReactNode }) {
  return (
    <button aria-label={label} className={`flex h-[17px] w-[31px] items-center justify-center rounded-sm border shadow-[inset_0_0_0_1px_rgba(255,255,255,.5)] ${close ? "border-[#552028] bg-gradient-to-b from-[#dc9a8c] to-[#c04a35]" : "border-[#607a9b] bg-gradient-to-b from-[#c4d6ea] to-[#9fb9d6]"}`}>
      {children}
    </button>
  );
}

export default function App() {
  return (
    <div className={`flex min-h-screen flex-col overflow-hidden bg-[#3c3c3c] ${UI}`}>
      <div className="flex h-[22px] shrink-0 items-center border-t border-[#34465b] bg-gradient-to-b from-[#99b3d3] to-[#b3cce8] pl-[3px] pr-[2px]">
        <ConnectIcon size={14} />
        <h1 className="whitespace-nowrap pl-2 font-['Open_Sans','DejaVu_Sans',sans-serif] text-[12px] text-black"><bdi className={`text-[10px] font-bold ${FA}`}>جلسه آنلاين گروه علم اطلاعات و دانش شناسي</bdi> (Sharing) - Adobe Connect</h1>
        <div className="ml-auto flex gap-[2px]">
          <WindowButton label="Minimize"><svg width="11" height="5" viewBox="0 0 11 5"><rect x=".5" y=".5" width="10" height="4" fill="#fff" stroke="#555" /></svg></WindowButton>
          <WindowButton label="Restore"><svg width="12" height="11" viewBox="0 0 12 11" fill="#fff" stroke="#4d5866"><path d="M4.500.5h7v6h-7z" /><path d="M.5 3.500h7v7h-7z" /><path d="M3 6.500h2v2H3z" /></svg></WindowButton>
          <WindowButton label="Close" close><svg width="12" height="10" viewBox="0 0 12 10"><path d="M2 1l8 8M10 1L2 9" stroke="#5b2a2a" strokeWidth="4" /><path d="M2 1l8 8M10 1L2 9" stroke="#fff" strokeWidth="2.500" /></svg></WindowButton>
        </div>
      </div>
      <MenuBar />
      <div className="flex flex-1">
        <div className="flex min-w-0 flex-1 gap-[3px] py-1 pl-1 pr-[5px]">
          <SharePod />
          <div className="flex w-[231px] shrink-0 flex-col gap-[5px]">
            <VideoPod />
            <AttendeesPod />
            <ChatPod />
          </div>
        </div>
        <LayoutSidebar />
      </div>
      <Taskbar />
    </div>
  );
}
